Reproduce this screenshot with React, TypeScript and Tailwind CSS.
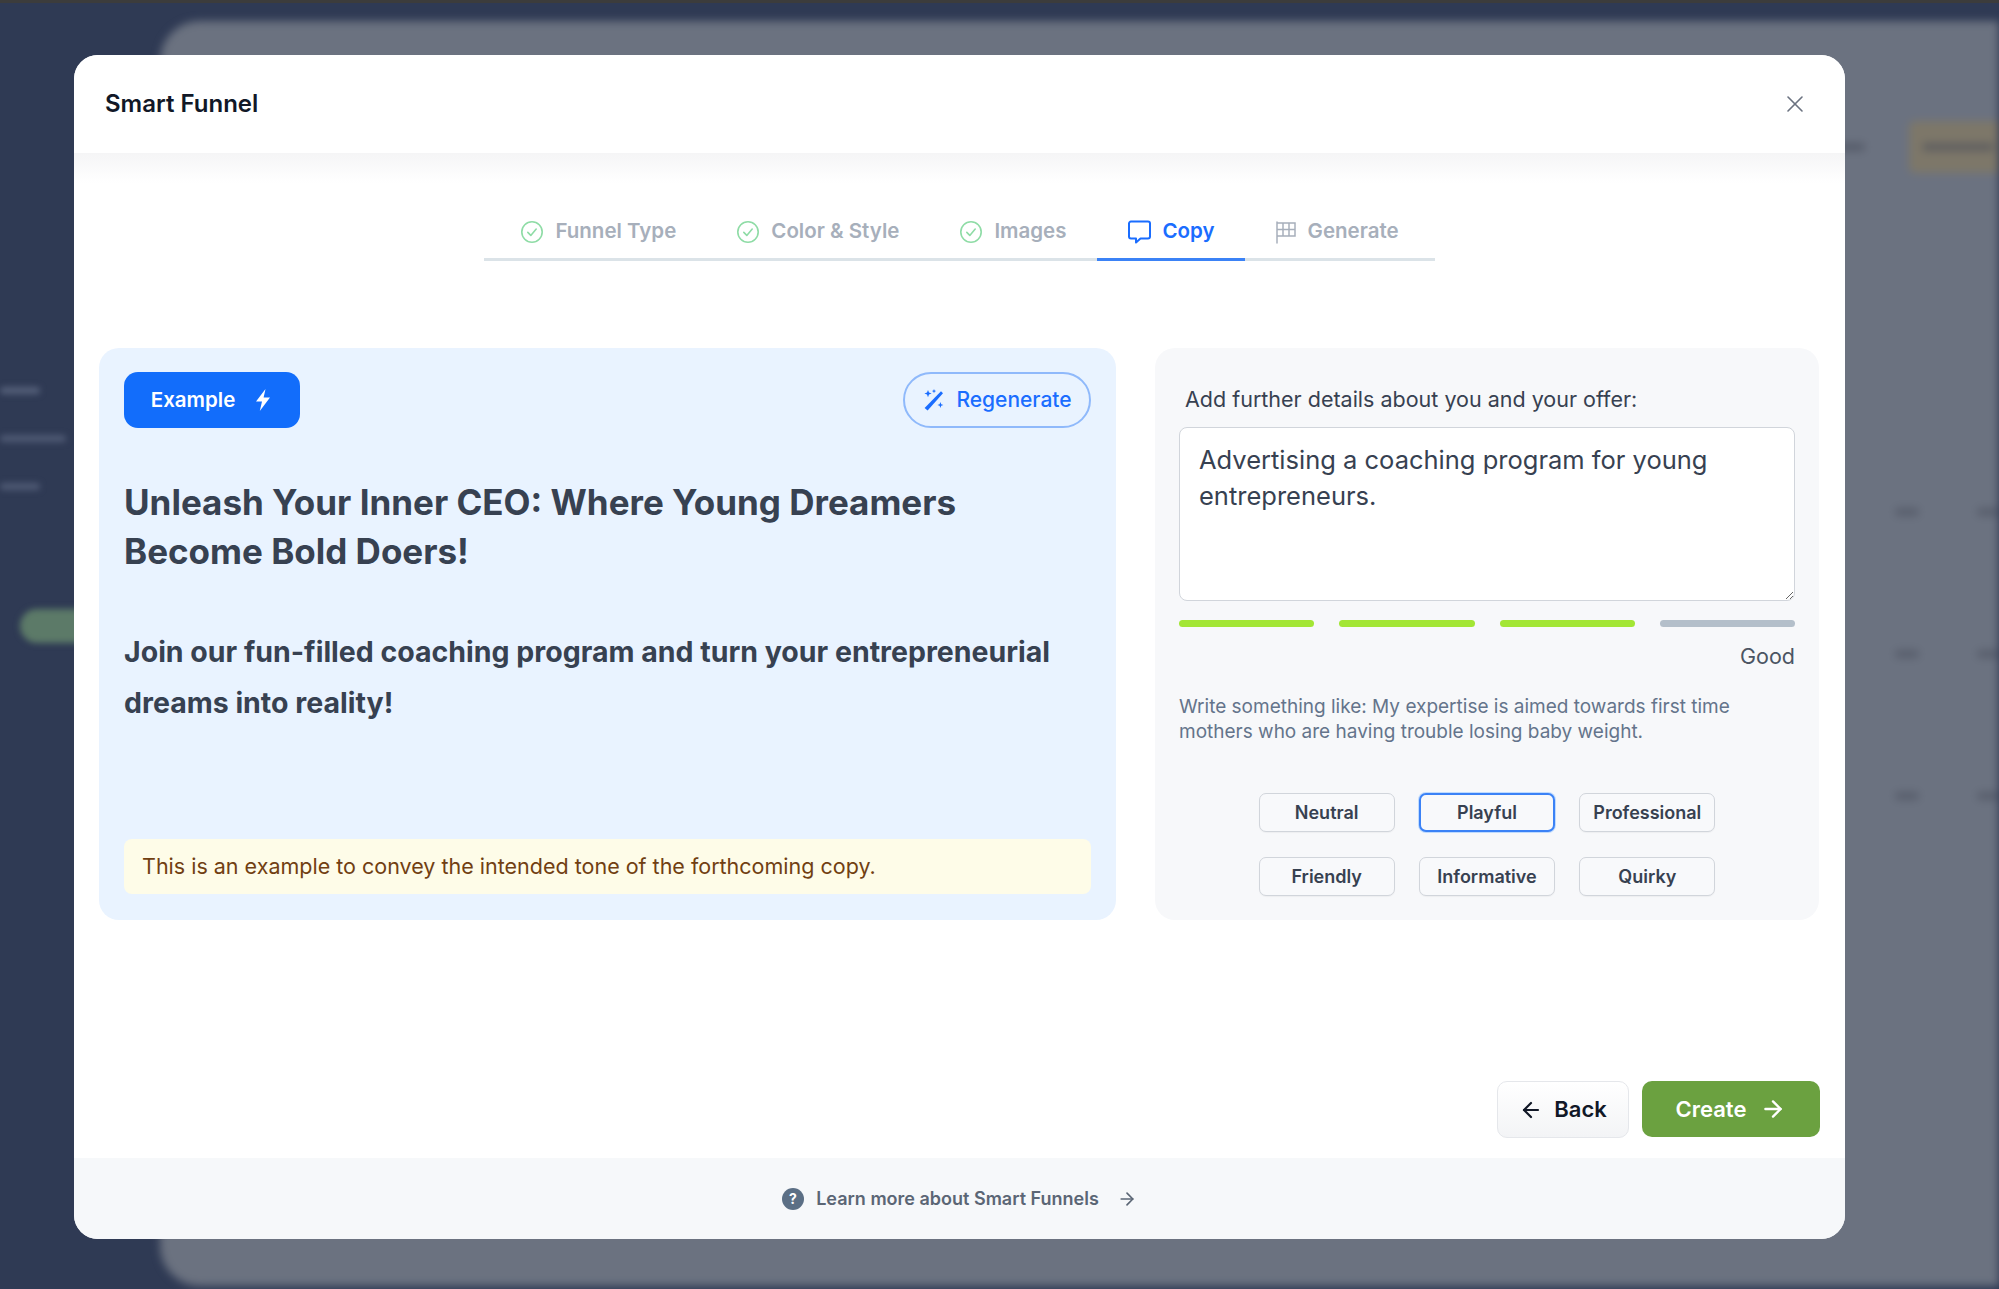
import React from "react";
import { ArrowLeft, ArrowRight, Check, X } from "lucide-react";

const CheckCircle = () => (
  <svg width="24" height="24" viewBox="0 0 24 24" fill="none" stroke="#8fdca6" strokeWidth="1.6" strokeLinecap="round" strokeLinejoin="round" className="shrink-0">
    <circle cx="12" cy="12" r="10.2" />
    <path d="M7.8 12.4l3 3 5.4-6.4" />
  </svg>
);

const Bubble = () => (
  <svg width="25" height="25" viewBox="0 0 25 25" fill="none" stroke="#1a6dff" strokeWidth="2" strokeLinejoin="round" className="shrink-0">
    <path d="M4 2.5h17a2 2 0 0 1 2 2v13a2 2 0 0 1-2 2h-7.5L9 23.5v-4H4a2 2 0 0 1-2-2v-13a2 2 0 0 1 2-2z" />
  </svg>
);

const FlagIcon = () => (
  <svg width="22" height="24" viewBox="0 0 22 24" fill="none" stroke="#a7afbb" strokeWidth="1.5" className="shrink-0">
    <path d="M2 2v21" strokeLinecap="round" />
    <path d="M2 3h18v13H2M8 3v13M14 3v13M2 9.5h18" />
  </svg>
);

const Bolt = () => (
  <svg width="20" height="24" viewBox="0 0 20 24" fill="#fff" className="shrink-0">
    <path d="M12.5 1 3 13.5h6L6.8 23 17 9.5h-6.4L12.5 1z" />
  </svg>
);

const Wand = () => (
  <svg width="24" height="24" viewBox="0 0 24 24" fill="#1a6dff" className="shrink-0">
    <path d="M19 3.2 21 5.2 5.6 22.6 2.6 20z" />
    <path d="M6 2l1 2.6L9.6 5.6 7 6.6 6 9.2 5 6.6 2.4 5.6 5 4.6zM18.4 14l.8 2.2 2.2.8-2.2.8-.8 2.2-.8-2.2-2.2-.8 2.2-.8zM12 1l.6 1.5 1.5.6-1.5.6L12 5.2l-.6-1.5-1.5-.6 1.5-.6z" />
  </svg>
);

const Step = ({ label, icon, active }: { label: string; icon: React.ReactNode; active?: boolean }) => (
  <div className={`flex items-center gap-[11px] h-[56px] -mb-[3px] px-[30px] border-b-[3px] ${active ? "border-[#3b82f6]" : "border-transparent"}`}>
    {icon}
    <span className={`text-[20.5px] font-semibold ${active ? "text-[#1a6dff]" : "text-[#a7afbb]"}`}>{label}</span>
  </div>
);

const Tone = ({ label, active }: { label: string; active?: boolean }) => (
  <button className={`h-[39px] rounded-[7px] bg-[#f8f9fb] text-[18px] font-semibold text-[#374151] ${active ? "border-2 border-[#3b82f6] shadow-[0_0_0_1px_#bfdbfe]" : "border border-[#d1d5db] shadow-[0_1px_1px_rgba(0,0,0,0.04)]"}`}>
    {label}
  </button>
);

const Blur = ({ className }: { className: string }) => <div className={`blur-[3px] ${className}`} />;

export default function App() {
  return (
    <div className="relative h-[1289px] w-[1999px] overflow-hidden bg-[#2f3a54] font-['Inter',sans-serif]">
      {/* dimmed page behind the dialog */}
      <div className="h-[3px] bg-[#3c3c3c]" />
      <div className="flex h-[1286px]">
        <aside className="w-[160px] shrink-0 flex flex-col pt-[384px] gap-[41px]">
          <Blur className="h-[7px] w-[40px] rounded bg-[#55607a]" />
          <Blur className="h-[7px] w-[66px] rounded bg-[#4f5a74]" />
          <Blur className="h-[7px] w-[40px] rounded bg-[#4f5a74]" />
          <Blur className="ml-[20px] mt-[78px] h-[34px] w-[120px] rounded-full bg-[#5c7a68]" />
        </aside>
        <main className="mt-[18px] mb-[3px] flex-1 rounded-tl-[40px] rounded-bl-[40px] bg-[#6b7280] blur-[4px] flex flex-col items-end pt-[100px]">
          <div className="flex items-center gap-[44px]">
            <div className="h-[8px] w-[44px] rounded bg-[#565c6a]" />
            <div className="flex h-[52px] w-[90px] items-center rounded-l-[6px] bg-[#7d7769] pl-[14px]">
              <div className="h-[8px] w-[70px] bg-[#5f5f60]" />
            </div>
          </div>
          <div className="mt-[335px] flex flex-col gap-[134px] pr-[0px]">
            {[0, 1, 2].map((i) => (
              <div key={i} className="flex gap-[58px]">
                <div className="h-[8px] w-[24px] rounded bg-[#585e6c]" />
                <div className="h-[8px] w-[22px] rounded bg-[#585e6c]" />
              </div>
            ))}
          </div>
        </main>
      </div>

      {/* dialog */}
      <div className="absolute left-[74px] top-[55px] flex h-[1184px] w-[1771px] flex-col overflow-hidden rounded-[24px] bg-white">
        <header className="flex h-[98px] shrink-0 items-center justify-between bg-white pl-[31px] pr-[36px]">
          <h1 className="text-[24px] font-semibold text-[#111827]">Smart Funnel</h1>
          <X size={28} strokeWidth={1.4} className="text-[#6b7280]" />
        </header>
        <div className="flex min-h-0 flex-1 flex-col bg-[linear-gradient(#f5f5f6,#ffffff_30px)] px-[25px]">
          <nav className="mx-auto mt-[37px] flex h-[71px] w-[951px] items-end justify-center">
            <div className="flex w-full justify-center border-b-[3px] border-[#dbe3e8]">
              <Step label="Funnel Type" icon={<CheckCircle />} />
              <Step label="Color & Style" icon={<CheckCircle />} />
              <Step label="Images" icon={<CheckCircle />} />
              <Step label="Copy" icon={<Bubble />} active />
              <Step label="Generate" icon={<FlagIcon />} />
            </div>
          </nav>

          <div className="mt-[87px] flex h-[572px] gap-[39px]">
            <section className="flex w-[1017px] flex-col rounded-[20px] bg-[#e9f3ff] px-[25px] pt-[24px] pb-[26px]">
              <div className="flex items-center justify-between">
                <div className="flex h-[56px] w-[176px] items-center justify-center gap-[18px] rounded-[14px] bg-[#126dfb] text-[20.5px] font-semibold text-white">
                  Example
                  <Bolt />
                </div>
                <div className="flex h-[56px] w-[188px] items-center justify-center gap-[10px] rounded-full border-2 border-[#8fb9fb] text-[21px] font-medium text-[#1a6dff]">
                  <Wand />
                  Regenerate
                </div>
              </div>
              <h2 className="mt-[50px] text-[35px] leading-[49px] font-bold text-[#374151]">
                Unleash Your Inner CEO: Where Young Dreamers Become Bold Doers!
              </h2>
              <p className="mt-[50px] text-[28.5px] leading-[51px] font-bold text-[#374151]">
                Join our fun-filled coaching program and turn your entrepreneurial dreams into reality!
              </p>
              <div className="mt-auto flex h-[55px] items-center rounded-[8px] bg-[#fefce8] pl-[18px] text-[21.5px] text-[#713f12]">
                This is an example to convey the intended tone of the forthcoming copy.
              </div>
            </section>

            <section className="flex w-[664px] flex-col rounded-[20px] bg-[#f7f8fa] px-[24px] pt-[36px]">
              <label className="pl-[6px] text-[21.5px] leading-[30px] text-[#374151]">Add further details about you and your offer:</label>
              <textarea
                readOnly
                value="Advertising a coaching program for young entrepreneurs."
                className="mt-[13px] h-[174px] w-full resize rounded-[8px] border border-[#d1d5db] bg-white px-[19px] py-[14px] text-[25.5px] leading-[36px] text-[#374151] outline-none"
              />
              <div className="mt-[19px] grid grid-cols-4 gap-[25px]">
                <div className="h-[7px] rounded-full bg-[#a3e635]" />
                <div className="h-[7px] rounded-full bg-[#a3e635]" />
                <div className="h-[7px] rounded-full bg-[#a3e635]" />
                <div className="h-[7px] rounded-full bg-[#b4bfca]" />
              </div>
              <div className="mt-[14px] text-right text-[21.5px] leading-[30px] text-[#4b5563]">Good</div>
              <p className="mt-[23px] text-[19px] leading-[25px] text-[#64748b]">
                Write something like: My expertise is aimed towards first time mothers who are having trouble losing baby weight.
              </p>
              <div className="mx-auto mt-[49px] grid w-[457px] grid-cols-3 gap-x-[24px] gap-y-[25px]">
                <Tone label="Neutral" />
                <Tone label="Playful" active />
                <Tone label="Professional" />
                <Tone label="Friendly" />
                <Tone label="Informative" />
                <Tone label="Quirky" />
              </div>
            </section>
          </div>

          <div className="mt-auto mb-[20px] flex justify-end gap-[13px]">
            <button className="flex h-[57px] w-[132px] items-center justify-center gap-[11px] rounded-[10px] border border-[#e5e7eb] bg-[linear-gradient(#ffffff,#f3f4f6)] text-[22px] font-semibold text-[#111827]">
              <ArrowLeft size={24} strokeWidth={2.2} />
              Back
            </button>
            <button className="flex h-[56px] w-[178px] items-center justify-center gap-[14px] rounded-[10px] bg-[#6ba140] text-[22px] font-semibold text-white">
              Create
              <ArrowRight size={26} strokeWidth={2.2} />
            </button>
          </div>
        </div>
        <footer className="flex h-[81px] shrink-0 items-center justify-center gap-[11px] bg-[#f6f8fa]">
          <svg width="22" height="22" viewBox="0 0 22 22" className="shrink-0">
            <circle cx="11" cy="11" r="11" fill="#5b6f85" />
            <text x="11" y="16" textAnchor="middle" fontSize="14" fontWeight="700" fill="#fff" fontFamily="Inter, sans-serif">?</text>
          </svg>
          <span className="ml-[1px] text-[18px] font-semibold text-[#5b6675]">Learn more about Smart Funnels</span>
          <ArrowRight size={20} strokeWidth={2} className="ml-[7px] text-[#5b6675]" />
        </footer>
      </div>
    </div>
  );
}
